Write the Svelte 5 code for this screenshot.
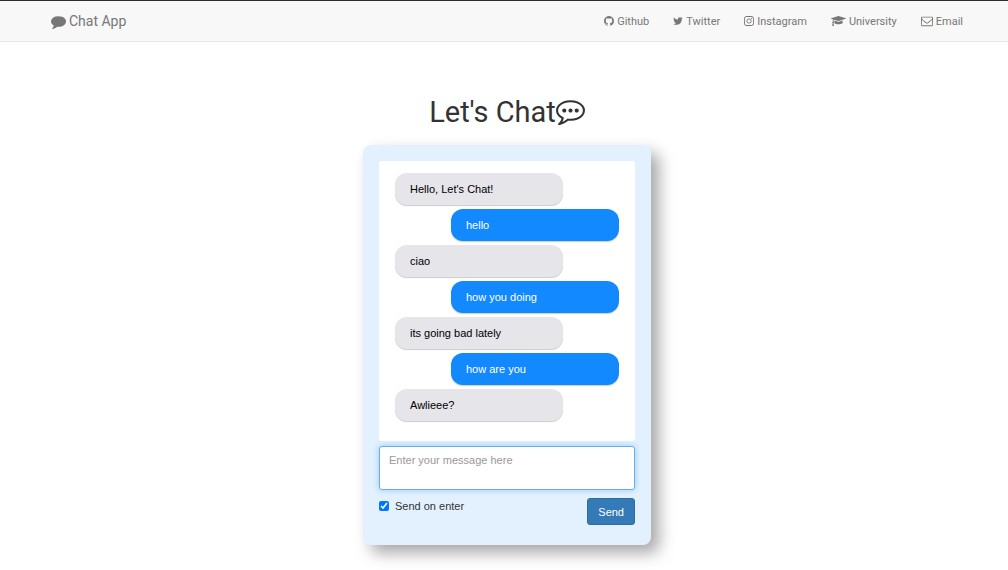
<script>
  const icons = {
    comment: {
      box: '0 0 1792 1792',
      d: 'M1792 896q0 174-120 321.5t-326 233-450 85.5q-70 0-145-8-198 175-460 242-49 14-114 22-17 2-30.500-9t-17.500-29v-1q-3-4-.5-12t2-10 4.500-9.500l6-9 7-8.500 8-9q7-8 31-34.500t34.500-38 31-39.500 32.500-51 27-59 26-76q-157-89-247.500-220t-90.500-281q0-130 71-248.500t191-204.500 286-136.500 348-50.500q244 0 450 85.500t326 233 120 321.500z'
    },
    commenting: {
      box: '0 0 1792 1792',
      d: 'M640 896q0 53-37.500 90.500t-90.500 37.500-90.500-37.500-37.500-90.500 37.500-90.500 90.500-37.500 90.500 37.500 37.500 90.500zm384 0q0 53-37.500 90.500t-90.500 37.500-90.500-37.500-37.500-90.500 37.500-90.500 90.500-37.500 90.500 37.500 37.500 90.500zm384 0q0 53-37.500 90.500t-90.500 37.500-90.500-37.500-37.500-90.500 37.500-90.500 90.500-37.500 90.500 37.500 37.500 90.500zm-512-512q-204 0-381.500 69.500t-282 187.500-104.500 255q0 112 71.500 213.500t201.500 175.500l87 50-27 96q-24 91-70 172 152-63 275-171l43-38 57 6q69 8 130 8 204 0 381.500-69.500t282-187.500 104.500-255-104.500-255-282-187.500-381.500-69.500zm896 512q0 174-120 321.500t-326 233-450 85.500q-70 0-145-8-198 175-460 242-49 14-114 22h-5q-15 0-27-10.500t-16-27.500v-1q-3-4-.5-12t2-10 4.500-9.500l6-9 7-8.500 8-9q7-8 31-34.500t34.500-38 31-39.500 32.500-51 27-59 26-76q-157-89-247.500-220t-90.500-281q0-174 120-321.500t326-233 450-85.500 450 85.500 326 233 120 321.500z'
    }
  };

  const links = [
    {
      label: 'Github',
      box: '128 0 1536 1792',
      size: 'narrow',
      d: 'M896 128q209 0 385.500 103t279.500 279.500 103 385.500q0 251-146.500 451.500t-378.500 277.500q-27 5-40-7t-13-30q0-3 .5-76.500t.5-134.500q0-97-52-142 57-6 102.500-18t94-39 81-66.500 53-105 20.500-150.500q0-119-79-206 37-91-8-204-28-9-81 11t-92 44l-38 24q-93-26-192-26t-192 26q-16-11-42.500-27t-83.500-38.500-85-13.500q-45 113-8 204-79 87-79 206 0 85 20.500 150t52.500 105 80.500 67 94 39 102.500 18q-39 36-49 103-21 10-45 15t-57 5-65.500-21.500-55.500-62.500q-19-32-48.500-52t-49.500-24l-20-3q-21 0-29 4.500t-5 11.500 9 14 13 12l7 5q22 10 43.500 38t31.500 51l10 23q13 38 44 61.500t67 30 69.500 7 55.500-3.500l23-4q0 38 .5 88.500t.5 54.500q0 18-13 30t-40 7q-232-77-378.500-277.500t-146.500-451.500q0-209 103-385.500t279.500-279.500 385.500-103z'
    },
    {
      label: 'Twitter',
      box: '64 0 1664 1792',
      size: 'narrow',
      d: 'M1684 408q-67 98-162 167 1 14 1 42 0 130-38 259.500t-115.500 248.500-184.500 210.500-258 146-323 54.500q-271 0-496-145 35 4 78 4 225 0 401-138-105-2-188-64.500t-114-159.500q33 5 61 5 43 0 85-11-112-23-185.500-111.500t-73.500-205.500v-4q68 38 146 41-66-44-105-115t-39-154q0-88 44-163 121 149 294.500 238.500t371.500 99.500q-8-38-8-74 0-134 94.500-228.500t228.500-94.500q140 0 236 102 109-21 205-78-37 115-142 178 93-10 186-50z'
    },
    {
      label: 'Instagram',
      box: '128 0 1536 1792',
      size: 'narrow',
      d: 'M1152 896q0-106-75-181t-181-75-181 75-75 181 75 181 181 75 181-75 75-181zm138 0q0 164-115 279t-279 115-279-115-115-279 115-279 279-115 279 115 115 279zm108-410q0 38-27 65t-65 27-65-27-27-65 27-65 65-27 65 27 27 65zm-502-220q-7 0-76.500-.5t-105.500 0-96.500 3-103 10-71.500 18.500q-50 20-88 58t-58 88q-11 29-18.500 71.500t-10 103-3 96.500 0 105.500.5 76.500-.5 76.500 0 105.500 3 96.500 10 103 18.500 71.500q20 50 58 88t88 58q29 11 71.500 18.500t103 10 96.500 3 105.500 0 76.500-.5 76.500.5 105.500 0 96.500-3 103-10 71.500-18.500q50-20 88-58t58-88q11-29 18.500-71.500t10-103 3-96.500 0-105.500-.5-76.500.5-76.500 0-105.500-3-96.500-10-103-18.500-71.500q-20-50-58-88t-88-58q-29-11-71.500-18.500t-103-10-96.500-3-105.500 0-76.500.5zm768 630q0 229-5 317-10 208-124 322t-322 124q-88 5-317 5t-317-5q-208-10-322-124t-124-322q-5-88-5-317t5-317q10-208 124-322t322-124q88-5 317-5t317 5q208 10 322 124t124 322q5 88 5 317z'
    },
    {
      label: 'University',
      box: '0 0 2304 1792',
      size: 'wide',
      d: 'M1774 836l18 316q4 69-82 128t-235 93.500-323 34.500-323-34.500-235-93.500-82-128l18-316 574 181q22 7 48 7t48-7zm530-324q0 23-22 31l-1120 352q-4 1-10 1t-10-1l-652-206q-43 34-71 111.500t-34 178.500q63 36 63 109 0 69-58 107l58 433q2 14-8 25-9 11-24 11h-192q-15 0-24-11-10-11-8-25l58-433q-58-38-58-107 0-73 65-111 11-207 98-330l-333-104q-22-8-22-31t22-31l1120-352q4-1 10-1t10 1l1120 352q22 8 22 31z'
    },
    {
      label: 'Email',
      box: '0 0 1792 1792',
      size: 'square',
      d: 'M1664 1504v-768q-32 36-69 66-268 206-426 338-51 43-83 67t-86.500 48.500-102.500 24.500h-2q-48 0-102.500-24.500t-86.500-48.500-83-67q-158-132-426-338-37-30-69-66v768q0 13 9.500 22.500t22.500 9.500h1472q13 0 22.500-9.500t9.500-22.500zm0-1051v-24.500l-.5-13-3-12.500-5.500-9-9-7.500-14-2.500h-1472q-13 0-22.500 9.500t-9.500 22.500q0 168 147 284 193 152 401 317 6 5 35 29.500t46 37.500 44.500 31.500 50.500 27.500 43 9h2q20 0 43-9t50.500-27.500 44.500-31.500 46-37.500 35-29.500q208-165 401-317 54-43 100.500-115.500t46.500-131.500zm128-37v1088q0 66-47 113t-113 47h-1472q-66 0-113-47t-47-113v-1088q0-66 47-113t113-47h1472q66 0 113 47t47 113z'
    }
  ];

  let messages = $state([
    { mine: false, text: "Hello, Let's Chat!" },
    { mine: true, text: 'hello' },
    { mine: false, text: 'ciao' },
    { mine: true, text: 'how you doing' },
    { mine: false, text: 'its going bad lately' },
    { mine: true, text: 'how are you' },
    { mine: false, text: 'Awlieee?' }
  ]);
  let draft = $state('');
  let sendOnEnter = $state(true);

  function send() {
    const text = draft.trim();
    if (!text) return;
    messages.push({ mine: true, text });
    draft = '';
  }

  function submit(event) {
    event.preventDefault();
    send();
  }

  function onKey(event) {
    if (event.key === 'Enter' && sendOnEnter) {
      event.preventDefault();
      send();
    }
  }
</script>

<header class="navbar">
  <nav class="bar">
    <a class="brand" href="#top">
      <svg viewBox={icons.comment.box} aria-hidden="true"><path d={icons.comment.d} /></svg>
      <span>Chat App</span>
    </a>
    <ul class="links">
      {#each links as link}
        <li>
          <a href="#{link.label.toLowerCase()}">
            <svg class={link.size} viewBox={link.box} aria-hidden="true"><path d={link.d} /></svg>
            <span>{link.label}</span>
          </a>
        </li>
      {/each}
    </ul>
  </nav>
</header>

<main>
  <h1>
    <span>Let's Chat</span>
    <svg viewBox={icons.commenting.box} aria-hidden="true"><path d={icons.commenting.d} /></svg>
  </h1>

  <form class="card" onsubmit={submit}>
    <div class="log">
      {#each messages as message}
        <p class="bubble" class:mine={message.mine}>{message.text}</p>
      {/each}
    </div>
    <textarea
      bind:value={draft}
      onkeydown={onKey}
      placeholder="Enter your message here"
      aria-label="Message"
    ></textarea>
    <div class="actions">
      <label>
        <input type="checkbox" bind:checked={sendOnEnter} />
        <span>Send on enter</span>
      </label>
      <button type="submit">Send</button>
    </div>
  </form>
</main>

<style>
  :global(body) {
    margin: 0;
    background: #fff;
    color: #333;
    font: 11px/16px Roboto, sans-serif;
  }

  svg {
    fill: currentColor;
    flex: none;
  }

  .navbar {
    border-top: 1px solid #2d2a2e;
    border-bottom: 1px solid #e7e7e7;
    background: #f8f8f8;
    padding-left: 6px;
  }

  .bar {
    display: flex;
    justify-content: space-between;
    max-width: 936px;
    margin: 0 auto;
  }

  .bar a {
    display: flex;
    align-items: center;
    height: 40px;
    padding: 0 12px;
    color: #777;
    text-decoration: none;
  }

  .bar .brand {
    gap: 3px;
    font-size: 14px;
  }

  .brand svg {
    width: 15px;
    height: 15px;
  }

  .links {
    display: flex;
    margin: 0;
    padding: 0;
    list-style: none;
  }

  .links a {
    gap: 3px;
  }

  .links span {
    padding-top: 1px;
  }

  .links svg {
    height: 12px;
  }

  .narrow {
    width: 10px;
  }

  .square {
    width: 12px;
  }

  .wide {
    width: 15px;
  }

  main {
    display: flex;
    flex-direction: column;
    align-items: center;
    padding: 54px 0 24px 6px;
  }

  h1 {
    display: flex;
    align-items: flex-start;
    margin: 0 0 17px;
    font-size: 29px;
    font-weight: 400;
    line-height: 32px;
  }

  h1 svg {
    width: 29px;
    height: 29px;
  }

  .card {
    box-sizing: border-box;
    width: 288px;
    max-width: 100%;
    padding: 16px 16px 20px;
    border-radius: 8px;
    background: #e3f1ff;
    box-shadow: 8px 8px 16px rgba(0, 0, 0, 0.35);
    font-family: "Liberation Sans", Arial, sans-serif;
  }

  .log {
    display: flex;
    flex-direction: column;
    gap: 4px;
    min-height: 252px;
    padding: 12px 16px 16px;
    border-radius: 3px;
    background: #fff;
  }

  .bubble {
    box-sizing: border-box;
    width: 75%;
    margin: 0;
    padding: 8px 15px;
    border-radius: 12px;
    background: #e5e5ea;
    box-shadow: 0 1px 1px rgba(0, 0, 0, 0.2);
    color: #000;
  }

  .mine {
    align-self: flex-end;
    background: #1289fe;
    color: #fff;
  }

  textarea {
    display: block;
    box-sizing: border-box;
    width: 100%;
    height: 44px;
    margin: 5px 0 8px;
    padding: 5px 9px;
    border: 1px solid #66afe9;
    border-radius: 3px;
    outline: 0;
    background: #fff;
    box-shadow: 0 0 6px rgba(102, 175, 233, 0.6);
    color: #555;
    font: inherit;
    resize: none;
  }

  textarea::placeholder {
    color: #999;
    opacity: 1;
  }

  .actions {
    display: flex;
    align-items: flex-start;
    justify-content: space-between;
  }

  label {
    display: flex;
    align-items: center;
    gap: 6px;
  }

  input {
    width: 10px;
    height: 10px;
    margin: 0;
  }

  button {
    height: 27px;
    padding: 0 10px;
    border: 1px solid #2e6da4;
    border-radius: 3px;
    background: #337ab7;
    color: #fff;
    font: inherit;
  }
</style>
